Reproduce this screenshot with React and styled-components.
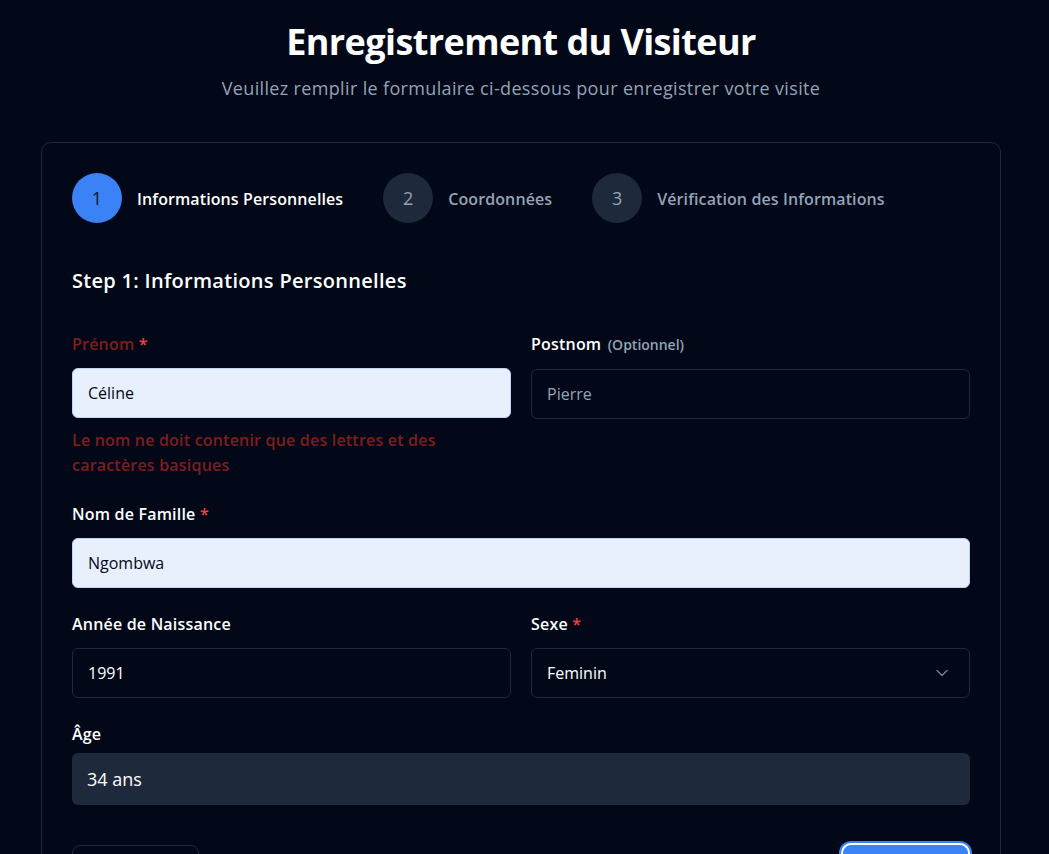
import React from "react";
import styled, { createGlobalStyle } from "styled-components";
import { ChevronDown } from "lucide-react";

const Global = createGlobalStyle`
  * { box-sizing: border-box; }
  html, body {
    margin: 0;
    background: #020817;
    font-family: "Open Sans", "Noto Sans", sans-serif;
    color: #f8fafc;
  }
`;

const Page = styled.div`
  min-height: 100vh;
  background: #020817;
  padding: 22px 48px 40px 41px;
`;

const Heading = styled.div`
  text-align: center;
  margin-bottom: 40px;
`;

const Title = styled.h1`
  margin: 0;
  font-size: 36px;
  line-height: 40px;
  font-weight: 700;
  color: #ffffff;
  letter-spacing: -0.6px;
`;

const Subtitle = styled.p`
  margin: 12px 0 0;
  font-size: 18px;
  line-height: 28px;
  color: #94a3b8;
  letter-spacing: 0.35px;
`;

const Card = styled.div`
  border: 1px solid #1e293b;
  border-radius: 10px;
  padding: 30px 30px 60px;
`;

const Steps = styled.div`
  display: flex;
  align-items: center;
  gap: 40px;
`;

const Step = styled.div`
  display: flex;
  align-items: center;
  gap: 15px;
`;

const Circle = styled.div`
  width: 50px;
  height: 50px;
  border-radius: 50%;
  display: flex;
  align-items: center;
  justify-content: center;
  font-size: 18px;
  background: ${(p) => (p.$active ? "#3b82f6" : "#1e293b")};
  color: ${(p) => (p.$active ? "#0f172a" : "#94a3b8")};
`;

const StepLabel = styled.span`
  font-size: 16px;
  font-weight: 600;
  letter-spacing: 0.1px;
  padding-top: 1px;
  color: ${(p) => (p.$active ? "#ffffff" : "#94a3b8")};
`;

const StepTitle = styled.h2`
  margin: 44px 0 37px;
  font-size: 20px;
  line-height: 28px;
  font-weight: 600;
  color: #ffffff;
  letter-spacing: 0.3px;
`;

const Form = styled.div`
  display: flex;
  flex-direction: column;
  gap: 24px;
`;

const Row = styled.div`
  display: grid;
  grid-template-columns: 1fr 1fr;
  gap: 20px;
`;

const Field = styled.div`
  display: flex;
  flex-direction: column;
`;

const Label = styled.label`
  font-size: 16px;
  line-height: 24px;
  font-weight: 600;
  letter-spacing: 0.2px;
  margin-bottom: ${(p) => (p.$tight ? "7px" : "12px")};
  color: ${(p) => (p.$error ? "#7f1d1d" : "#ffffff")};
`;

const Star = styled.span`
  color: #ef4444;
`;

const Hint = styled.span`
  font-size: 14px;
  color: #94a3b8;
  font-weight: 600;
  letter-spacing: 0;
  margin-left: 2px;
`;

const Input = styled.div`
  height: 50px;
  border-radius: 6px;
  border: 1px solid ${(p) => (p.$filled ? "#bfd3f5" : "#1e293b")};
  background: ${(p) => (p.$filled ? "#e8f0fe" : "#020817")};
  color: ${(p) => (p.$filled ? "#020817" : p.$placeholder ? "#94a3b8" : "#ffffff")};
  font-size: 16px;
  padding: 0 15px;
  display: flex;
  align-items: center;
  justify-content: space-between;
`;

const ReadOnly = styled.div`
  height: 52px;
  border-radius: 6px;
  background: #1e293b;
  color: #ffffff;
  font-size: 18px;
  padding: 0 15px;
  display: flex;
  align-items: center;
`;

const ErrorText = styled.p`
  margin: 10px 0 0;
  font-size: 16px;
  line-height: 25px;
  font-weight: 600;
  letter-spacing: 0.2px;
  color: #7f1d1d;
`;

const Actions = styled.div`
  display: flex;
  justify-content: space-between;
  align-items: center;
  margin-top: 40px;
`;

const Button = styled.button`
  font-family: inherit;
  font-size: 16px;
  font-weight: 500;
  height: 44px;
  border-radius: 8px;
  padding: 0 24px;
  cursor: pointer;
  border: 1px solid ${(p) => (p.$primary ? "#3b82f6" : "#1e293b")};
  background: ${(p) => (p.$primary ? "#3b82f6" : "transparent")};
  color: #ffffff;
  width: ${(p) => (p.$primary ? "125px" : "127px")};
  box-shadow: ${(p) => (p.$primary ? "0 0 0 2px #ffffff, 0 0 0 4px #3b82f6" : "none")};
  margin-right: ${(p) => (p.$primary ? "2px" : "0")};
`;

const Chevron = styled(ChevronDown)`
  color: #94a3b8;
  opacity: 0.8;
  margin-right: 2px;
`;

const steps = [
  "Informations Personnelles",
  "Coordonnées",
  "Vérification des Informations",
];

export default function App() {
  return (
    <Page>
      <Global />
      <Heading>
        <Title>Enregistrement du Visiteur</Title>
        <Subtitle>
          Veuillez remplir le formulaire ci-dessous pour enregistrer votre visite
        </Subtitle>
      </Heading>
      <Card>
        <Steps>
          {steps.map((s, i) => (
            <Step key={s}>
              <Circle $active={i === 0}>{i + 1}</Circle>
              <StepLabel $active={i === 0}>{s}</StepLabel>
            </Step>
          ))}
        </Steps>
        <StepTitle>Step 1: Informations Personnelles</StepTitle>
        <Form>
          <Row>
            <Field>
              <Label $error>
                Prénom <Star>*</Star>
              </Label>
              <Input $filled>Céline</Input>
              <ErrorText>
                Le nom ne doit contenir que des lettres et des caractères basiques
              </ErrorText>
            </Field>
            <Field>
              <Label>
                Postnom <Hint>(Optionnel)</Hint>
              </Label>
              <Input $placeholder>Pierre</Input>
            </Field>
          </Row>
          <Field>
            <Label>
              Nom de Famille <Star>*</Star>
            </Label>
            <Input $filled>Ngombwa</Input>
          </Field>
          <Row>
            <Field>
              <Label>Année de Naissance</Label>
              <Input>1991</Input>
            </Field>
            <Field>
              <Label>
                Sexe <Star>*</Star>
              </Label>
              <Input>
                Feminin
                <Chevron size={20} strokeWidth={1.5} />
              </Input>
            </Field>
          </Row>
          <Field>
            <Label $tight>Âge</Label>
            <ReadOnly>34 ans</ReadOnly>
          </Field>
        </Form>
        <Actions>
          <Button>Précédent</Button>
          <Button $primary>Suivant</Button>
        </Actions>
      </Card>
    </Page>
  );
}
